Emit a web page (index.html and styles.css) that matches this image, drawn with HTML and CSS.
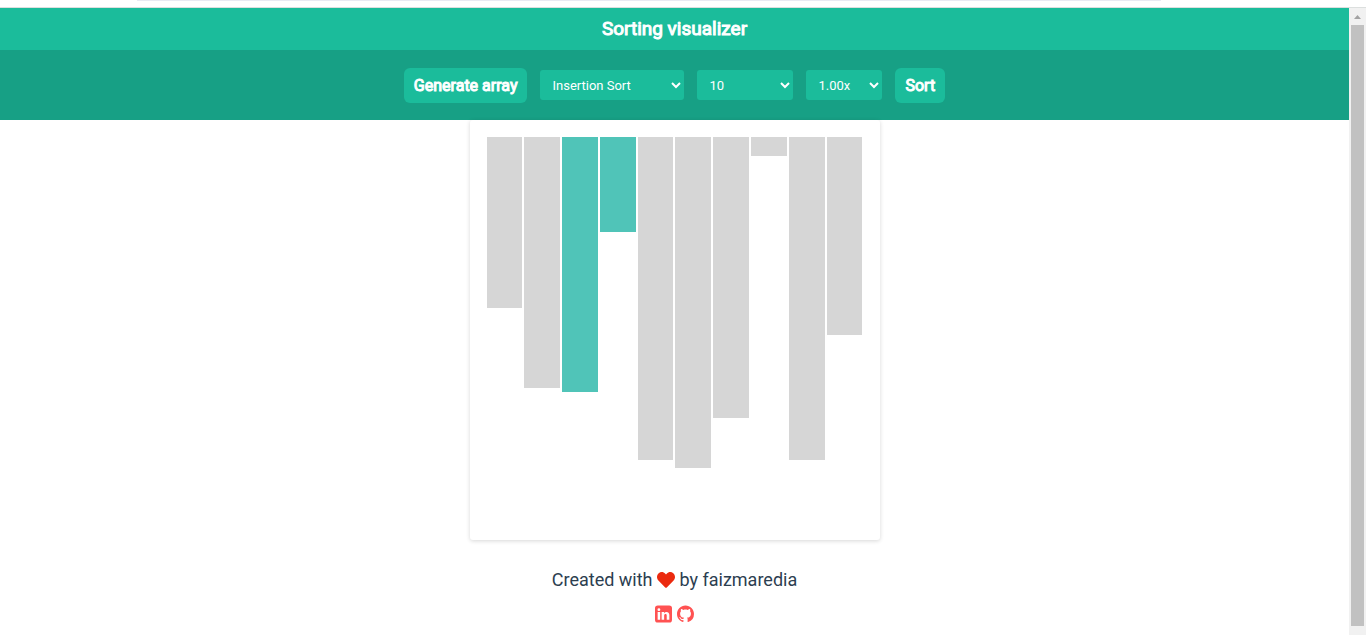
FILE: index.html
```html
<!DOCTYPE html>
<html lang="en">
<head>
<meta charset="utf-8">
<title>Sorting visualizer</title>
<link rel="stylesheet" href="styles.css">
</head>
<body>
<div class="top-strip"><div class="top-line"></div></div>
<div class="viewport">
  <div class="page">
    <header class="header"><h1 class="title">Sorting visualizer</h1></header>
    <nav class="nav">
      <button class="btn" type="button">Generate array</button>
      <select class="menu menu-algo" aria-label="Algorithm"><option>Insertion Sort</option></select>
      <select class="menu menu-size" aria-label="Array size"><option>10</option></select>
      <select class="menu menu-speed" aria-label="Speed"><option>1.00x</option></select>
      <button class="btn" type="button">Sort</button>
    </nav>
    <main class="array">
      <div class="bar" style="height:171px"></div>
      <div class="bar" style="height:251px"></div>
      <div class="bar active" style="height:255px"></div>
      <div class="bar active" style="height:95px"></div>
      <div class="bar" style="height:323px"></div>
      <div class="bar" style="height:331px"></div>
      <div class="bar" style="height:281px"></div>
      <div class="bar" style="height:19px"></div>
      <div class="bar" style="height:323px"></div>
      <div class="bar" style="height:198px"></div>
    </main>
    <footer class="footer">
      <p class="credit">Created with
        <svg class="heart" viewBox="0 0 512 512" aria-hidden="true"><path d="M462.300 62.600C407.500 15.900 326 24.300 275.700 76.200L256 96.500l-19.700-20.300C186.100 24.300 104.500 15.900 49.700 62.600c-62.800 53.600-66.100 149.800-9.900 207.900l193.500 199.800c12.500 12.900 32.800 12.900 45.300 0l193.500-199.800c56.300-58.100 53-154.300-9.800-207.900z"/></svg>
        by faizmaredia</p>
      <div class="links">
        <a class="link" href="#linkedin" aria-label="LinkedIn"><svg viewBox="0 0 18 18"><path fill-rule="evenodd" d="M3 0h12a3 3 0 0 1 3 3v12a3 3 0 0 1-3 3H3a3 3 0 0 1-3-3V3a3 3 0 0 1 3-3zM2.800 7v8h2.700V7zM4.150 2.900a1.500 1.500 0 1 0 0 3 1.500 1.500 0 0 0 0-3zM7 7v8h2.700v-4.400c0-2 2.700-2.200 2.700 0V15h2.800V10c0-3.800-4-3.900-5.500-1.900V7z"/></svg></a>
        <a class="link" href="#github" aria-label="GitHub"><svg viewBox="0 0 16 16"><path d="M8 0C3.580 0 0 3.580 0 8c0 3.540 2.290 6.530 5.470 7.590.4.070.55-.17.55-.38 0-.19-.01-.82-.01-1.490-2.010.37-2.530-.49-2.690-.94-.09-.23-.48-.94-.82-1.130-.28-.15-.68-.52-.01-.53.63-.01 1.080.58 1.230.82.72 1.210 1.870.87 2.330.66.07-.52.28-.87.51-1.070-1.780-.2-3.640-.89-3.640-3.950 0-.87.31-1.590.82-2.150-.08-.2-.36-1.020.08-2.120 0 0 .67-.21 2.200.82.64-.18 1.320-.27 2-.27s1.360.09 2 .27c1.530-1.040 2.200-.82 2.200-.82.44 1.100.16 1.920.08 2.120.51.56.82 1.270.82 2.150 0 3.070-1.870 3.750-3.650 3.950.29.25.54.73.54 1.480 0 1.070-.01 1.930-.01 2.200 0 .21.15.46.55.38A8.010 8.010 0 0 0 16 8c0-4.420-3.580-8-8-8z"/></svg></a>
      </div>
    </footer>
  </div>
  <div class="scrollbar" aria-hidden="true">
    <svg class="arrow" viewBox="0 0 17 17"><path d="M5 11h7L8.500 7z"/></svg>
    <div class="thumb"></div>
  </div>
</div>
</body>
</html>
```
FILE: styles.css
```css
* { box-sizing: border-box; }
body {
  margin: 0;
  min-height: 100vh;
  display: flex;
  flex-direction: column;
  background: #fff;
  color: #2c3e50;
  font-family: Roboto, "Liberation Sans", sans-serif;
}
.top-strip {
  height: 8px;
  padding: 0 15% 0 10%;
  border-bottom: 1px solid #dcdfde;
}
.top-line { height: 1px; background: #e8eaf3; }
.viewport { display: flex; flex: 1; }
.page { flex: 1; display: flex; flex-direction: column; }
.header { background: #1bbc9b; text-align: center; padding: 9px 0; }
.title {
  margin: 0;
  color: #fff;
  font-size: 19px;
  line-height: 24px;
  font-weight: 400;
  -webkit-text-stroke: 1px #fff;
}
.nav {
  display: flex;
  justify-content: center;
  align-items: center;
  gap: 13px;
  height: 70px;
  background: #17a085;
}
.btn {
  padding: 8px 10px;
  border: 0;
  border-radius: 6px;
  background: #1bbc9b;
  color: #fff;
  font-family: inherit;
  font-size: 16px;
  line-height: 19px;
  -webkit-text-stroke: 1px #fff;
}
.menu {
  height: 30px;
  padding: 0 0 0 8px;
  border: 0;
  border-radius: 3px;
  background: #1bbc9b;
  color: #fff;
  font-family: inherit;
  font-size: 13px;
}
.menu-algo { width: 144px; }
.menu-size { width: 96px; }
.menu-speed { width: 76px; }
.array {
  display: flex;
  align-items: flex-start;
  gap: 2px;
  width: 410px;
  height: 420px;
  margin: 0 auto;
  padding: 17px;
  border-radius: 3px;
  box-shadow: 0 1px 4px rgba(0, 0, 0, 0.16);
}
.bar { flex: 1; background: #d6d6d6; }
.bar.active { background: #50c4b8; }
.footer { padding-top: 28px; text-align: center; }
.credit { margin: 0; font-size: 18px; line-height: 24px; }
.heart { width: 18px; height: 18px; vertical-align: -3px; fill: #eb2a0f; }
.links { display: flex; justify-content: center; gap: 5px; padding-top: 13px; }
.link, .link svg { display: block; width: 17px; height: 18px; fill: #ff5252; }
.scrollbar {
  width: 17px;
  padding: 0 2px 9px;
  background: #f1f1f1;
  display: flex;
  flex-direction: column;
}
.arrow { height: 17px; margin: 0 -2px; fill: #a3a3a3; }
.thumb { flex: 1; background: #c1c1c1; }
```
